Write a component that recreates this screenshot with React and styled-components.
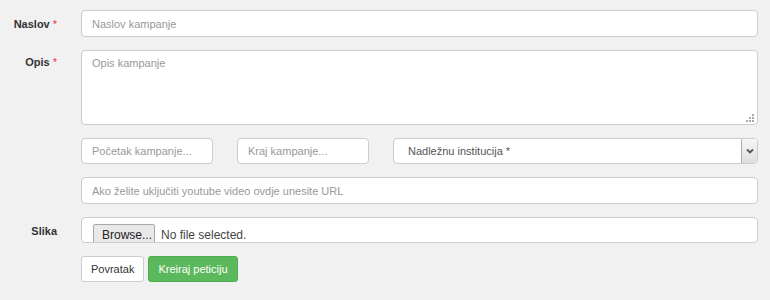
import React from "react";
import styled, { createGlobalStyle } from "styled-components";

const Global = createGlobalStyle`
  html, body { margin: 0; padding: 0; background: #f1f1f1; }
  body { font-family: "Liberation Sans", Arial, sans-serif; font-size: 11px; color: #333; }
  * { box-sizing: border-box; }
`;

const Form = styled.form`
  display: flex;
  flex-direction: column;
  gap: 13px;
  padding: 10px 12px 0 0;
  width: 770px;
`;

const Row = styled.div`
  display: grid;
  grid-template-columns: 57px 1fr;
  column-gap: 24px;
  align-items: start;
`;

const Label = styled.label`
  text-align: right;
  font-weight: bold;
  font-size: 11px;
  line-height: 13px;
  color: #333;
  padding-top: ${(p) => p.$pt ?? 8}px;
  white-space: nowrap;
`;

const Req = styled.span`
  color: #f0304a;
  font-weight: normal;
  margin-left: 3px;
`;

const fieldBase = `
  font-family: "Liberation Sans", Arial, sans-serif;
  font-size: 11px;
  color: #555;
  background: #fff;
  border: 1px solid #ccc;
  border-radius: 4px;
  outline: none;
  &::placeholder { color: #999; opacity: 1; }
`;

const Input = styled.input`
  ${fieldBase}
  display: block;
  width: ${(p) => p.$w || "100%"};
  height: ${(p) => p.$h || 27}px;
  padding: 0 10px;
`;

const AreaWrap = styled.div`
  position: relative;
`;

const TextArea = styled.textarea`
  ${fieldBase}
  display: block;
  width: 100%;
  height: 75px;
  padding: 6px 10px;
  line-height: 13px;
  resize: none;
`;

const Grip = styled.svg`
  position: absolute;
  right: 3px;
  bottom: 3px;
  width: 9px;
  height: 8px;
`;

const Inline = styled.div`
  display: flex;
  gap: 24px;
  align-items: stretch;
`;

const SelectBox = styled.div`
  flex: 1;
  display: flex;
  height: 26px;
  background: #fff;
  border: 1px solid #ccc;
  border-radius: 4px;
  overflow: hidden;
`;

const SelectValue = styled.div`
  flex: 1;
  display: flex;
  align-items: center;
  padding-left: 14px;
  font-size: 11px;
  color: #555;
`;

const Arrow = styled.div`
  width: 16px;
  display: flex;
  align-items: center;
  justify-content: center;
  border-left: 1px solid #b0b0b0;
  background: linear-gradient(#f6f6f6, #dedede);
`;

const FileBox = styled.div`
  display: flex;
  align-items: flex-start;
  height: 26px;
  background: #fff;
  border: 1px solid #ccc;
  border-radius: 4px;
  overflow: hidden;
  padding: 6px 0 0 11px;
`;

const Browse = styled.div`
  width: 62px;
  height: 28px;
  background: #e9e9e9;
  border: 1px solid #a7a7a7;
  border-radius: 2px;
  font-size: 12px;
  line-height: 12px;
  color: #222;
  padding: 4px 0 0 8px;
`;

const FileName = styled.span`
  font-size: 12px;
  line-height: 12px;
  color: #444;
  padding: 5px 0 0 6px;
`;

const Buttons = styled.div`
  display: flex;
  gap: 4px;
`;

const Button = styled.button`
  font-family: "Liberation Sans", Arial, sans-serif;
  font-size: 11px;
  height: 26px;
  padding: 0 9px;
  border-radius: 3px;
  border: 1px solid ${(p) => (p.$primary ? "#4cae4c" : "#ccc")};
  background: ${(p) => (p.$primary ? "#5cb85c" : "#fff")};
  color: ${(p) => (p.$primary ? "#fff" : "#333")};
  cursor: pointer;
`;

export default function App() {
  return (
    <>
      <Global />
      <Form onSubmit={(e) => e.preventDefault()}>
        <Row>
          <Label>
            Naslov<Req>*</Req>
          </Label>
          <Input placeholder="Naslov kampanje" />
        </Row>
        <Row>
          <Label $pt={6}>
            Opis<Req>*</Req>
          </Label>
          <AreaWrap>
            <TextArea placeholder="Opis kampanje" />
            <Grip viewBox="0 0 9 8">
              <g fill="#a8a8a8">
                <rect x="6" y="0" width="2" height="2" />
                <rect x="3" y="3" width="2" height="2" />
                <rect x="6" y="3" width="2" height="2" />
                <rect x="0" y="6" width="2" height="2" />
                <rect x="3" y="6" width="2" height="2" />
                <rect x="6" y="6" width="2" height="2" />
              </g>
            </Grip>
          </AreaWrap>
        </Row>
        <Row>
          <span />
          <Inline>
            <Input placeholder="Početak kampanje..." $w="132px" $h={26} />
            <Input placeholder="Kraj kampanje..." $w="132px" $h={26} />
            <SelectBox>
              <SelectValue>Nadležnu institucija *</SelectValue>
              <Arrow>
                <svg width="8" height="6" viewBox="0 0 8 6">
                  <path d="M1 1.5 L4 4.5 L7 1.5" fill="none" stroke="#555" strokeWidth="1.8" />
                </svg>
              </Arrow>
            </SelectBox>
          </Inline>
        </Row>
        <Row>
          <span />
          <Input placeholder="Ako želite uključiti youtube video ovdje unesite URL" />
        </Row>
        <Row>
          <Label $pt={8}>Slika</Label>
          <FileBox>
            <Browse>Browse...</Browse>
            <FileName>No file selected.</FileName>
          </FileBox>
        </Row>
        <Row>
          <span />
          <Buttons>
            <Button type="button">Povratak</Button>
            <Button type="submit" $primary>
              Kreiraj peticiju
            </Button>
          </Buttons>
        </Row>
      </Form>
    </>
  );
}
